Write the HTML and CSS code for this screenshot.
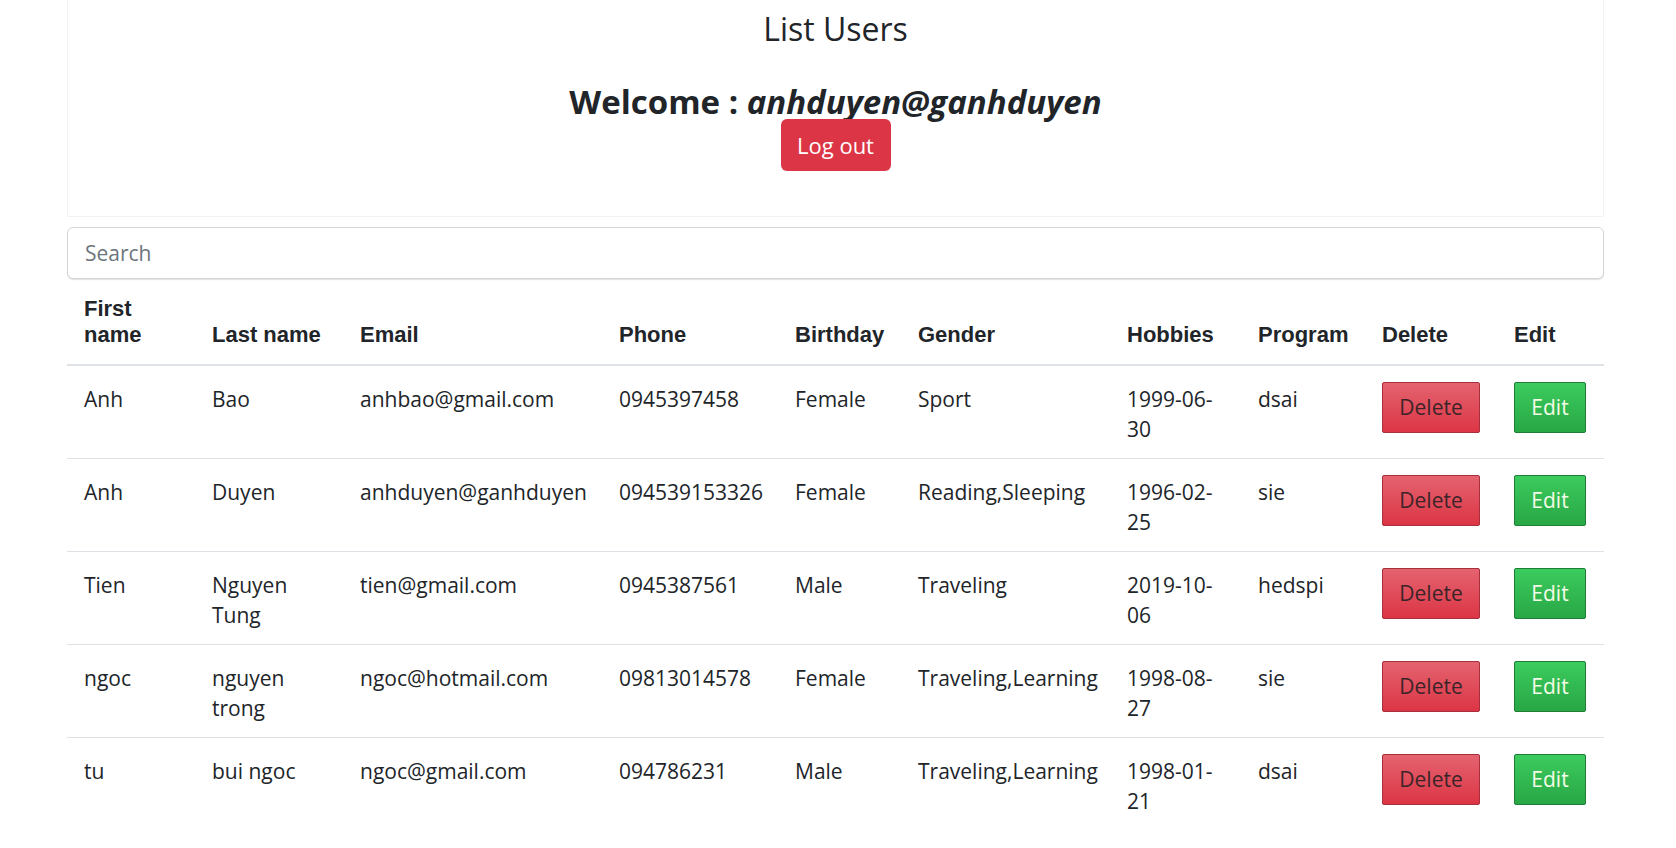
FILE: index.html
```html
<!DOCTYPE html>
<html lang="en">
<head>
<meta charset="utf-8">
<title>List Users</title>
<link rel="stylesheet" href="styles.css">
</head>
<body>
<div class="page">
  <div class="card">
    <h3 class="title">List Users</h3>
    <h2 class="welcome">Welcome : <em>anhduyen@ganhduyen</em></h2>
    <button class="btn-logout" type="button">Log out</button>
  </div>
  <input class="search" type="text" placeholder="Search">
  <table class="users">
    <colgroup>
      <col class="c1"><col class="c2"><col class="c3"><col class="c4"><col class="c5">
      <col class="c6"><col class="c7"><col class="c8"><col class="c9"><col class="c10">
    </colgroup>
    <thead>
      <tr>
        <th>First name</th><th>Last name</th><th>Email</th><th>Phone</th><th>Birthday</th>
        <th>Gender</th><th>Hobbies</th><th>Program</th><th>Delete</th><th>Edit</th>
      </tr>
    </thead>
    <tbody>
      <tr>
        <td>Anh</td><td>Bao</td><td>anhbao@gmail.com</td><td>0945397458</td><td>Female</td>
        <td>Sport</td><td>1999-06-30</td><td>dsai</td>
        <td><button class="btn-del" type="button">Delete</button></td>
        <td><button class="btn-edit" type="button">Edit</button></td>
      </tr>
      <tr>
        <td>Anh</td><td>Duyen</td><td>anhduyen@ganhduyen</td><td>094539153326</td><td>Female</td>
        <td>Reading,Sleeping</td><td>1996-02-25</td><td>sie</td>
        <td><button class="btn-del" type="button">Delete</button></td>
        <td><button class="btn-edit" type="button">Edit</button></td>
      </tr>
      <tr>
        <td>Tien</td><td>Nguyen Tung</td><td>tien@gmail.com</td><td>0945387561</td><td>Male</td>
        <td>Traveling</td><td>2019-10-06</td><td>hedspi</td>
        <td><button class="btn-del" type="button">Delete</button></td>
        <td><button class="btn-edit" type="button">Edit</button></td>
      </tr>
      <tr>
        <td>ngoc</td><td>nguyen trong</td><td>ngoc@hotmail.com</td><td>09813014578</td><td>Female</td>
        <td>Traveling,Learning</td><td>1998-08-27</td><td>sie</td>
        <td><button class="btn-del" type="button">Delete</button></td>
        <td><button class="btn-edit" type="button">Edit</button></td>
      </tr>
      <tr>
        <td>tu</td><td>bui ngoc</td><td>ngoc@gmail.com</td><td>094786231</td><td>Male</td>
        <td>Traveling,Learning</td><td>1998-01-21</td><td>dsai</td>
        <td><button class="btn-del" type="button">Delete</button></td>
        <td><button class="btn-edit" type="button">Edit</button></td>
      </tr>
    </tbody>
  </table>
</div>
</body>
</html>
```
FILE: styles.css
```css
* { box-sizing: border-box; }

body {
  margin: 0;
  background: #fff;
  color: #212529;
  font-family: "Open Sans", "Noto Sans", sans-serif;
}

.page {
  padding: 0 72px 0 67px;
}

.card {
  display: flex;
  flex-direction: column;
  align-items: center;
  border: 1px solid #f3f3f3;
  border-top: 0;
  padding: 8px 0 45px;
}

.title {
  margin: 0;
  font-size: 32px;
  font-weight: 400;
  line-height: 42px;
}

.welcome {
  margin: 35px 0 0;
  font-size: 33px;
  font-weight: 700;
  line-height: 34px;
}

.welcome em {
  font-style: italic;
}

.btn-logout {
  width: 110px;
  height: 52px;
  border: 0;
  border-radius: 6px;
  background: #dc3545;
  color: #fff;
  font-family: inherit;
  font-size: 22px;
  line-height: 30px;
}

.search {
  display: block;
  width: 100%;
  height: 52px;
  margin: 10px 0 0;
  padding: 0 17px;
  border: 1px solid #d2d6da;
  border-radius: 6px;
  box-shadow: 0 1px 1px rgba(0, 0, 0, 0.12);
  font-family: inherit;
  font-size: 21px;
  color: #495057;
}

.search::placeholder {
  color: #6c757d;
}

.users {
  width: 100%;
  border-collapse: collapse;
  table-layout: fixed;
}

.c1 { width: 128px; }
.c2 { width: 148px; }
.c3 { width: 259px; }
.c4 { width: 176px; }
.c5 { width: 123px; }
.c6 { width: 209px; }
.c7 { width: 131px; }
.c8 { width: 124px; }
.c9 { width: 132px; }
.c10 { width: 107px; }

.users th {
  padding: 17px 17px 16px;
  border-bottom: 2px solid #dee2e6;
  font-family: "Liberation Sans", Arial, sans-serif;
  font-size: 22px;
  font-weight: 700;
  line-height: 26px;
  text-align: left;
  vertical-align: bottom;
}

.users td {
  padding: 18px 17px 14px;
  border-top: 1px solid #dee2e6;
  font-size: 21px;
  line-height: 30px;
  vertical-align: top;
}

.btn-del,
.btn-edit {
  display: block;
  height: 51px;
  padding: 0;
  border-radius: 2px;
  font-family: inherit;
  font-size: 21px;
  line-height: 49px;
  text-align: center;
}

.users td .btn-del,
.users td .btn-edit {
  margin-top: -2px;
}

.btn-del {
  width: 98px;
  border: 1px solid #a8303c;
  background: linear-gradient(to bottom, #e4636f, #dc3545);
  color: #3b2428;
}

.btn-edit {
  width: 72px;
  border: 1px solid #1f7d36;
  background: linear-gradient(to bottom, #3ccb5e, #28a745);
  color: #f4fbe6;
}
```
